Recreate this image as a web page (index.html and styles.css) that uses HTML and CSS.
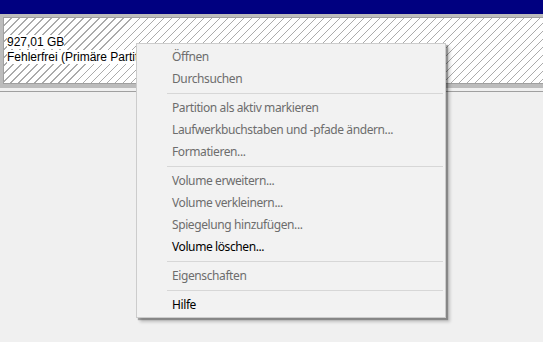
FILE: index.html
```html
<!DOCTYPE html>
<html lang="de">
<head>
    <meta charset="UTF-8">
    <title>Datenträgerverwaltung</title>
    <link rel="stylesheet" href="styles.css">
</head>
<body>
    <div class="titlebar"></div>

    <div class="volume">
        <div class="volume-box">
            <span class="volume-text">927,01 GB</span>
            <span class="volume-text">Fehlerfrei (Primäre Partition)</span>
        </div>
    </div>
    <div class="strip-gap"></div>

    <!-- Context menu -->
    <div class="menu">
        <div class="item disabled">Öffnen</div>
        <div class="item disabled">Durchsuchen</div>
        <div class="sep"></div>
        <div class="item disabled">Partition als aktiv markieren</div>
        <div class="item disabled">Laufwerkbuchstaben und -pfade ändern...</div>
        <div class="item disabled">Formatieren...</div>
        <div class="sep"></div>
        <div class="item disabled">Volume erweitern...</div>
        <div class="item disabled">Volume verkleinern...</div>
        <div class="item disabled">Spiegelung hinzufügen...</div>
        <div class="item">Volume löschen...</div>
        <div class="sep"></div>
        <div class="item disabled">Eigenschaften</div>
        <div class="sep"></div>
        <div class="item">Hilfe</div>
    </div>
</body>
</html>
```

FILE: styles.css
```css
body {
    margin: 0;
    background: #f0f0f0;
    font-family: "Noto Sans", "Open Sans", sans-serif;
    font-size: 12px;
    letter-spacing: -0.4px;
    height: 342px;
    overflow: hidden;
}
.titlebar {
    height: 14px;
    background: #000080;
}
.volume {
    background: #bcbcbc;
    padding: 3px 0 4px 3px;
}
.volume-box {
    height: 67px;
    border: 1px solid #a0a0a0;
    border-right: none;
    background-color: #fff;
    background-image: repeating-linear-gradient(135deg, #fff 0, #fff 4.9px, #ababab 4.9px, #ababab 5.66px);
    padding: 17px 0 0 3px;
    box-sizing: border-box;
    display: flex;
    flex-direction: column;
    align-items: flex-start;
    overflow: hidden;
    white-space: nowrap;
}
.volume-text {
    background: #fff;
    color: #000;
    font-family: "Liberation Sans", Arial, sans-serif;
    letter-spacing: 0;
    line-height: 14px;
    height: 14px;
    margin-bottom: 1px;
}
.strip-gap {
    height: 3px;
    border-bottom: 1px solid #a0a0a0;
}
.menu {
    position: absolute;
    left: 136px;
    top: 43px;
    width: 310px;
    box-sizing: border-box;
    background: #f2f2f2;
    border: 1px solid #cccccc;
    padding: 2px 2px 1px 2px;
    box-shadow: 2px 2px 1px rgba(0, 0, 0, 0.3), 4px 4px 3px rgba(0, 0, 0, 0.2);
}
.item {
    height: 22px;
    line-height: 22px;
    padding-left: 33px;
    color: #000;
    white-space: nowrap;
}
.item.disabled {
    color: #6d6d6d;
}
.sep {
    height: 1px;
    background: #d7d7d7;
    margin: 3px 0 3px 28px;
}
```
